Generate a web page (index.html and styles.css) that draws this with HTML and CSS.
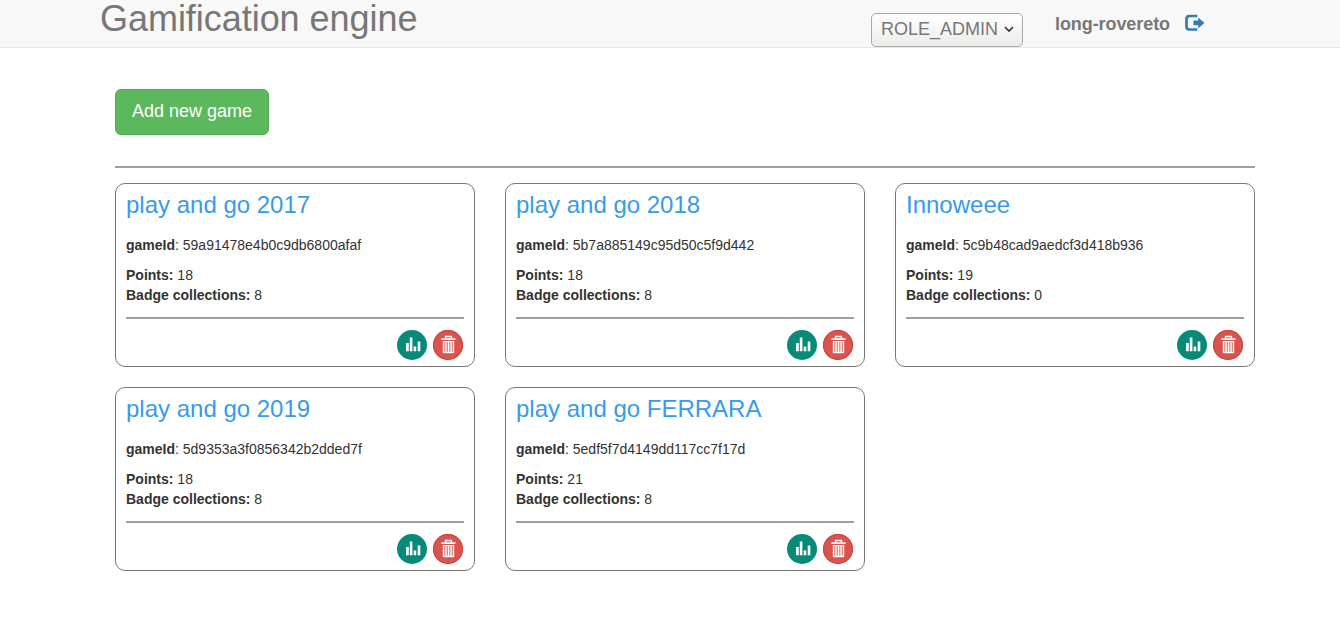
FILE: index.html
```html
<!DOCTYPE html>
<html lang="en">
<head>
<meta charset="utf-8">
<title>Gamification engine</title>
<link rel="stylesheet" href="styles.css">
</head>
<body>
<svg class="sprite" aria-hidden="true">
  <symbol id="chart" viewBox="0 0 30 30"><path fill="#fff" d="M9 13h2.800v8.300H9zM12.800 7.500h2.600v13.800h-2.600zM16.700 16.500h2.500v4.800h-2.500zM20.700 11.500h2.600v9.800h-2.600z"/></symbol>
  <symbol id="trash" viewBox="0 0 30 30"><path fill="none" stroke="#fff" stroke-width="1.300" d="M12.500 8.500V6.500h6v2"/><path fill="#fff" d="M8.300 8.200h14.200v1.700H8.300zM9.800 11h11.400v11.200q0 1.100-1.100 1.100h-9.200q-1.100 0-1.100-1.100z"/><path stroke="#e07b75" stroke-width="1.200" d="M11.800 12v9.800M14.300 12v9.800M16.800 12v9.800M19.300 12v9.800"/></symbol>
</svg>
<header class="navbar">
  <div class="nav-inner">
    <h1 class="brand">Gamification engine</h1>
    <button class="role">ROLE_ADMIN<svg width="10" height="7" viewBox="0 0 10 7"><path d="M1 1l4 4 4-4" fill="none" stroke="#333" stroke-width="1.600"/></svg></button>
    <strong class="user">long-rovereto</strong>
    <a class="logout" aria-label="Log out"><svg width="20" height="18" viewBox="0 0 20 18"><path d="M12.300 2H4.500Q1.500 2 1.500 5v7.500q0 3 3 3h7.800" fill="none" stroke="#337ab7" stroke-width="2.700"/><path d="M8.500 6.600h4.700V3.500l6.300 5.400-6.300 5.400v-3.100H8.500z" fill="#337ab7"/></svg></a>
  </div>
</header>
<main class="container">
  <button class="add">Add new game</button>
  <hr class="divider">
  <div class="games">
    <section class="card">
      <h2>play and go 2017</h2>
      <p><b>gameId</b>: 59a91478e4b0c9db6800afaf</p>
      <div><b>Points:</b> 18</div><div><b>Badge collections:</b> 8</div>
      <hr>
      <div class="actions"><a class="stats"><svg><use href="#chart"/></svg></a><a class="delete"><svg><use href="#trash"/></svg></a></div>
    </section>
    <section class="card">
      <h2>play and go 2018</h2>
      <p><b>gameId</b>: 5b7a885149c95d50c5f9d442</p>
      <div><b>Points:</b> 18</div><div><b>Badge collections:</b> 8</div>
      <hr>
      <div class="actions"><a class="stats"><svg><use href="#chart"/></svg></a><a class="delete"><svg><use href="#trash"/></svg></a></div>
    </section>
    <section class="card">
      <h2>Innoweee</h2>
      <p><b>gameId</b>: 5c9b48cad9aedcf3d418b936</p>
      <div><b>Points:</b> 19</div><div><b>Badge collections:</b> 0</div>
      <hr>
      <div class="actions"><a class="stats"><svg><use href="#chart"/></svg></a><a class="delete"><svg><use href="#trash"/></svg></a></div>
    </section>
    <section class="card">
      <h2>play and go 2019</h2>
      <p><b>gameId</b>: 5d9353a3f0856342b2dded7f</p>
      <div><b>Points:</b> 18</div><div><b>Badge collections:</b> 8</div>
      <hr>
      <div class="actions"><a class="stats"><svg><use href="#chart"/></svg></a><a class="delete"><svg><use href="#trash"/></svg></a></div>
    </section>
    <section class="card">
      <h2>play and go FERRARA</h2>
      <p><b>gameId</b>: 5edf5f7d4149dd117cc7f17d</p>
      <div><b>Points:</b> 21</div><div><b>Badge collections:</b> 8</div>
      <hr>
      <div class="actions"><a class="stats"><svg><use href="#chart"/></svg></a><a class="delete"><svg><use href="#trash"/></svg></a></div>
    </section>
  </div>
</main>
</body>
</html>
```
FILE: styles.css
```css
* { box-sizing: border-box; }
body {
  margin: 0;
  background: #fff;
  color: #333;
  font: 14px/20px "Liberation Sans", Arial, sans-serif;
}
button { font-family: inherit; }
.sprite { display: none; }
.navbar {
  height: 48px;
  background: #f8f8f8;
  border-bottom: 1px solid #e7e7e7;
  color: #777;
}
.nav-inner {
  display: flex;
  align-items: flex-start;
  width: 1140px;
  margin: 0 auto;
}
.brand {
  margin: 0 auto 0 0;
  font-size: 36px;
  line-height: 38px;
  font-weight: 400;
  letter-spacing: -0.04px;
  white-space: nowrap;
}
.role {
  display: flex;
  align-items: center;
  justify-content: space-between;
  width: 152px;
  height: 34px;
  margin: 13px 32px 0 0;
  padding: 0 8px 2px 9px;
  border: 1px solid #aaa;
  border-radius: 5px;
  background: linear-gradient(#fff, #edebe9);
  color: #777;
  font-size: 18px;
}
.user {
  width: 130px;
  margin-top: 14px;
  font-size: 18px;
  letter-spacing: -0.08px;
}
.logout {
  display: block;
  width: 55px;
  height: 18px;
  margin-top: 14px;
}
.logout svg { display: block; }
.container {
  width: 1140px;
  margin: 41px 0 0 115px;
}
.add {
  display: block;
  width: 154px;
  height: 46px;
  padding: 0 0 2px;
  border: 1px solid #4cae4c;
  border-radius: 6px;
  background: #5cb85c;
  color: #fff;
  font-size: 18px;
}
hr {
  height: 2px;
  margin: 0;
  border: 0;
  background: #9e9e9e;
}
.divider { margin: 31px 0 15px; }
.games {
  display: grid;
  grid-template-columns: repeat(3, 360px);
  gap: 20px 30px;
}
.card {
  height: 184px;
  padding: 8px 10px 0;
  border: 1px solid #777;
  border-radius: 10px;
}
.card h2 {
  margin: 0;
  color: #379be9;
  font-size: 24px;
  line-height: 26px;
  font-weight: 400;
}
.card p { margin: 17px 0 10px; }
.card hr { margin: 12px 0 11px; }
.actions {
  display: flex;
  justify-content: flex-end;
  gap: 6px;
  padding-right: 1px;
}
.actions a {
  width: 30px;
  height: 30px;
  border-radius: 50%;
}
.actions svg {
  display: block;
  width: 30px;
  height: 30px;
}
.stats { background: #078b79; }
.delete {
  background: #d9534f;
  box-shadow: inset 0 0 0 1px #d43f3a;
}
```
